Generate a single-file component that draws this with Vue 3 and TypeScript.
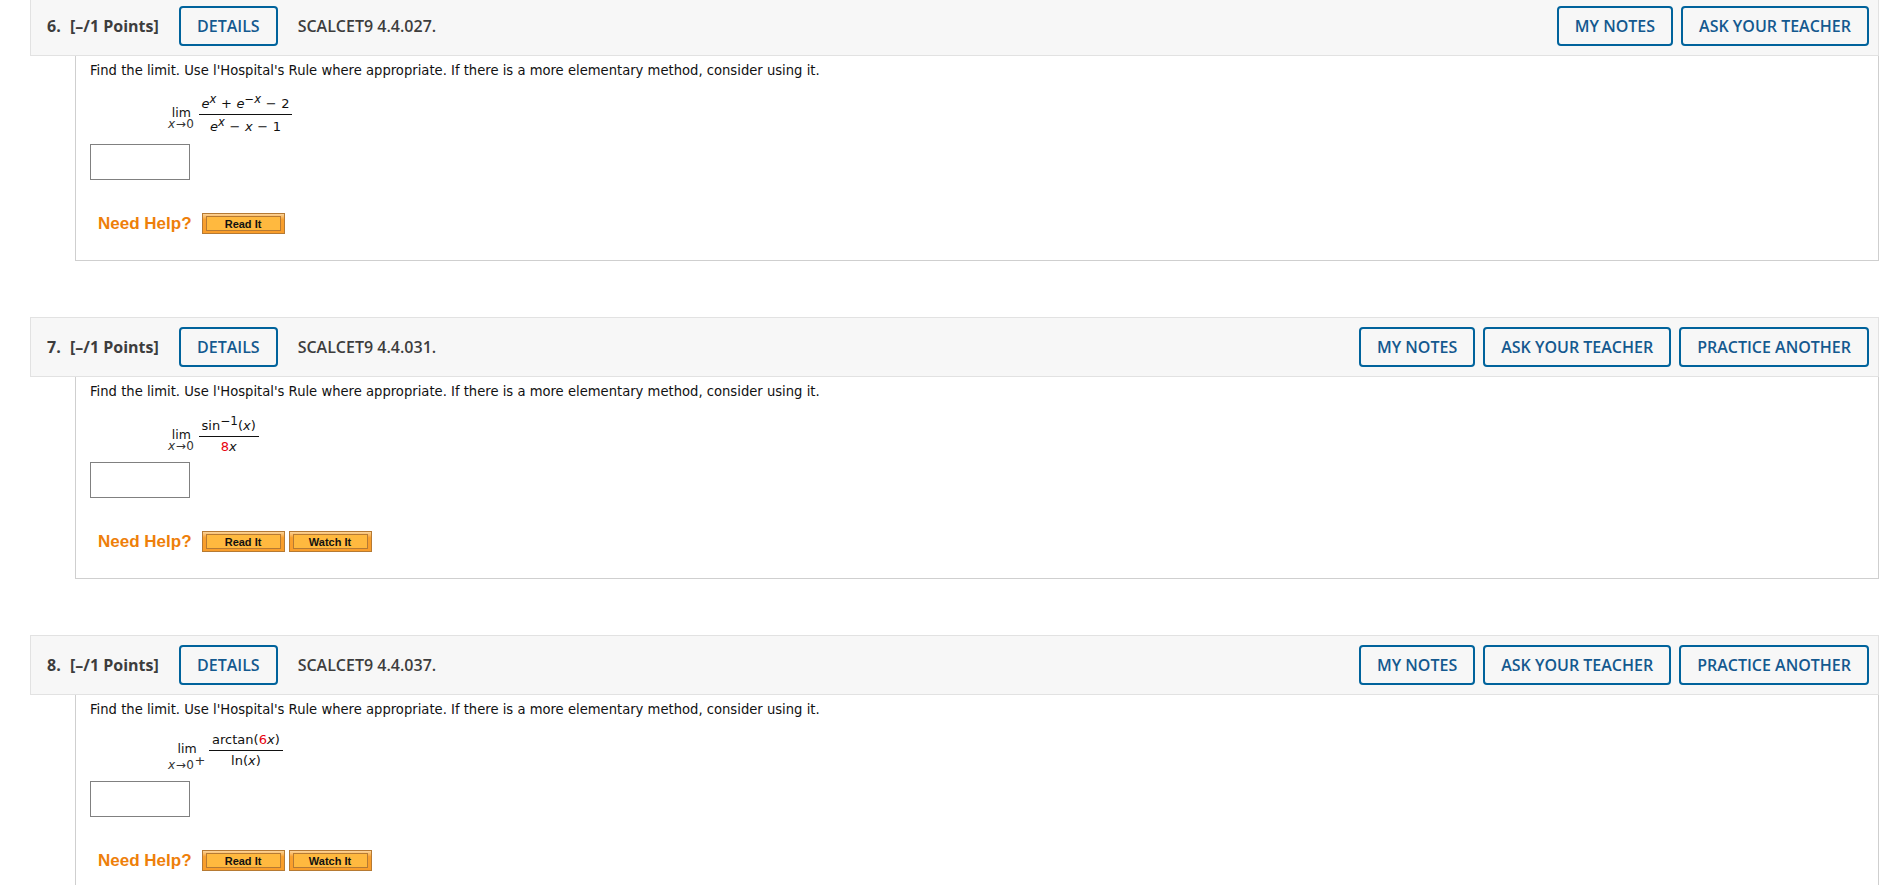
<script setup lang="ts">
interface Piece {
  text: string
  cls?: 'it' | 'red' | 'sup' | 'sup-it'
}

interface Question {
  num: number
  code: string
  practice: boolean
  watch: boolean
  plus: boolean
  top: Piece[]
  bottom: Piece[]
}

const questions: Question[] = [
  {
    num: 6,
    code: 'SCALCET9 4.4.027.',
    practice: false,
    watch: false,
    plus: false,
    top: [
      { text: 'e', cls: 'it' },
      { text: 'x', cls: 'sup-it' },
      { text: ' + ' },
      { text: 'e', cls: 'it' },
      { text: '−x', cls: 'sup-it' },
      { text: ' − 2' },
    ],
    bottom: [
      { text: 'e', cls: 'it' },
      { text: 'x', cls: 'sup-it' },
      { text: ' − ' },
      { text: 'x', cls: 'it' },
      { text: ' − 1' },
    ],
  },
  {
    num: 7,
    code: 'SCALCET9 4.4.031.',
    practice: true,
    watch: true,
    plus: false,
    top: [
      { text: 'sin' },
      { text: '−1', cls: 'sup' },
      { text: '(' },
      { text: 'x', cls: 'it' },
      { text: ')' },
    ],
    bottom: [
      { text: '8', cls: 'red' },
      { text: 'x', cls: 'it' },
    ],
  },
  {
    num: 8,
    code: 'SCALCET9 4.4.037.',
    practice: true,
    watch: true,
    plus: true,
    top: [
      { text: 'arctan(' },
      { text: '6', cls: 'red' },
      { text: 'x', cls: 'it' },
      { text: ')' },
    ],
    bottom: [
      { text: 'ln(' },
      { text: 'x', cls: 'it' },
      { text: ')' },
    ],
  },
]

// rows with a superscript sit a little taller
const hasSup = (pieces: Piece[]) => pieces.some((p) => p.cls === 'sup' || p.cls === 'sup-it')
</script>

<template>
  <div class="page">
    <section v-for="q in questions" :key="q.num" class="question">
      <header class="q-header">
        <span class="q-num">{{ q.num }}.</span>
        <span class="q-points">[–/1 Points]</span>
        <button class="q-btn">DETAILS</button>
        <span class="q-code">{{ q.code }}</span>
        <div class="q-actions">
          <button class="q-btn">MY NOTES</button>
          <button class="q-btn">ASK YOUR TEACHER</button>
          <button v-if="q.practice" class="q-btn">PRACTICE ANOTHER</button>
        </div>
      </header>

      <div class="q-body">
        <p class="q-text">
          Find the limit. Use l'Hospital's Rule where appropriate. If there is a more elementary method, consider using it.
        </p>

        <div :class="['math', { 'has-plus': q.plus }]">
          <span class="lim">lim</span>
          <div :class="['frac-top', { tall: hasSup(q.top) }]">
            <span v-for="(p, i) in q.top" :key="i" :class="p.cls">{{ p.text }}</span>
          </div>
          <span class="lim-sub"><i>x</i>→0<span v-if="q.plus" class="lim-plus">+</span></span>
          <div :class="['frac-bottom', { tall: hasSup(q.bottom) }]">
            <span v-for="(p, i) in q.bottom" :key="i" :class="p.cls">{{ p.text }}</span>
          </div>
        </div>

        <input class="answer" type="text" />

        <div class="help">
          <span class="help-label">Need Help?</span>
          <a class="help-btn"><span>Read It</span></a>
          <a v-if="q.watch" class="help-btn"><span>Watch It</span></a>
        </div>
      </div>
    </section>
  </div>
</template>

<style>
html,
body {
  overflow: hidden;
  background: #fff;
}
</style>

<style scoped>
.page {
  height: 885px;
  overflow: hidden;
  box-sizing: border-box;
}

.question {
  margin: 0 7px 56px 30px;
}

.question:first-child {
  margin-top: -4px;
}

.question:first-child .math {
  margin-top: 9px;
}

.q-header {
  display: flex;
  align-items: center;
  height: 60px;
  box-sizing: border-box;
  padding: 0 9px 0 16px;
  background: #f7f7f7;
  border: 1px solid #e2e2e2;
  font-family: "Open Sans", sans-serif;
  font-size: 16px;
  font-weight: 600;
  color: #3d3d3d;
}

.q-num {
  width: 23px;
  font-weight: 700;
}

.q-points {
  width: 109px;
  font-weight: 700;
}

.q-code {
  margin-left: 20px;
}

.q-actions {
  display: flex;
  gap: 8px;
  margin-left: auto;
}

.q-btn {
  height: 40px;
  padding: 0 16px;
  background: #f7f7f7;
  border: 2px solid #00639c;
  border-radius: 4px;
  font-family: "Open Sans", sans-serif;
  font-size: 16px;
  font-weight: 600;
  color: #14598f;
}

.q-body {
  box-sizing: border-box;
  margin-left: 45px;
  padding: 7px 14px 26px;
  border: 1px solid #cfcfcf;
  border-top: 0;
  font-family: "DejaVu Sans", sans-serif;
  color: #111;
}

.q-text {
  margin: 0;
  font-size: 13.17px;
  line-height: 16px;
}

.math {
  display: grid;
  grid-template-columns: auto auto;
  column-gap: 4px;
  justify-content: start;
  margin: 10px 0 4px 78px;
  font-size: 13px;
  word-spacing: 0.5px;
}

.math.has-plus {
  column-gap: 3px;
  margin-bottom: 9px;
}

.lim {
  align-self: end;
  justify-self: center;
  margin-bottom: -4px;
  font-size: 12.5px;
  line-height: 13px;
}

.lim-sub {
  justify-self: center;
  margin-top: 3px;
  font-size: 12px;
  line-height: 12px;
  letter-spacing: 0.6px;
  color: #333;
  white-space: nowrap;
}

.has-plus .lim-sub {
  margin-top: 8px;
}

.lim-plus {
  position: relative;
  top: -4px;
  font-size: 13px;
  line-height: 0;
}

.frac-top,
.frac-bottom {
  padding: 0 3px;
  text-align: center;
  white-space: pre;
}

.frac-top {
  padding-top: 1px;
  line-height: 21px;
  border-bottom: 1px solid #111;
}

.frac-top.tall {
  padding-top: 5px;
}

.frac-bottom {
  padding-bottom: 1px;
  line-height: 20px;
}

.frac-bottom.tall {
  padding-top: 2px;
  padding-bottom: 3px;
}

.it {
  font-style: italic;
}

.red {
  color: #e8000d;
}

.sup,
.sup-it {
  position: relative;
  top: -5px;
  font-size: 11.5px;
  line-height: 0;
}

.sup {
  font-size: 12px;
}

.sup-it {
  font-style: italic;
}

.answer {
  display: block;
  width: 100px;
  height: 36px;
  box-sizing: border-box;
  margin: 0;
  padding: 0;
  background: #fff;
  border: 1px solid #808080;
}

.help {
  display: flex;
  align-items: center;
  gap: 4px;
  margin: 33px 0 0 8px;
}

.help-label {
  margin-right: 6px;
  font-family: "Liberation Sans", Arial, sans-serif;
  font-size: 17px;
  font-weight: 700;
  color: #ee7f0a;
}

.help-btn {
  display: block;
  width: 83px;
  height: 21px;
  box-sizing: border-box;
  padding: 2px 3px;
  background: linear-gradient(#fbd49a, #f9a02e 30%, #f99d2a);
  border: 1px solid #b67a33;
  font-family: "Liberation Sans", Arial, sans-serif;
  font-size: 11px;
  font-weight: 700;
  color: #111;
}

.help-btn span {
  display: block;
  height: 15px;
  box-sizing: border-box;
  border: 1px solid #b67a33;
  background: #ffb93f;
  text-align: center;
  line-height: 14px;
}
</style>
